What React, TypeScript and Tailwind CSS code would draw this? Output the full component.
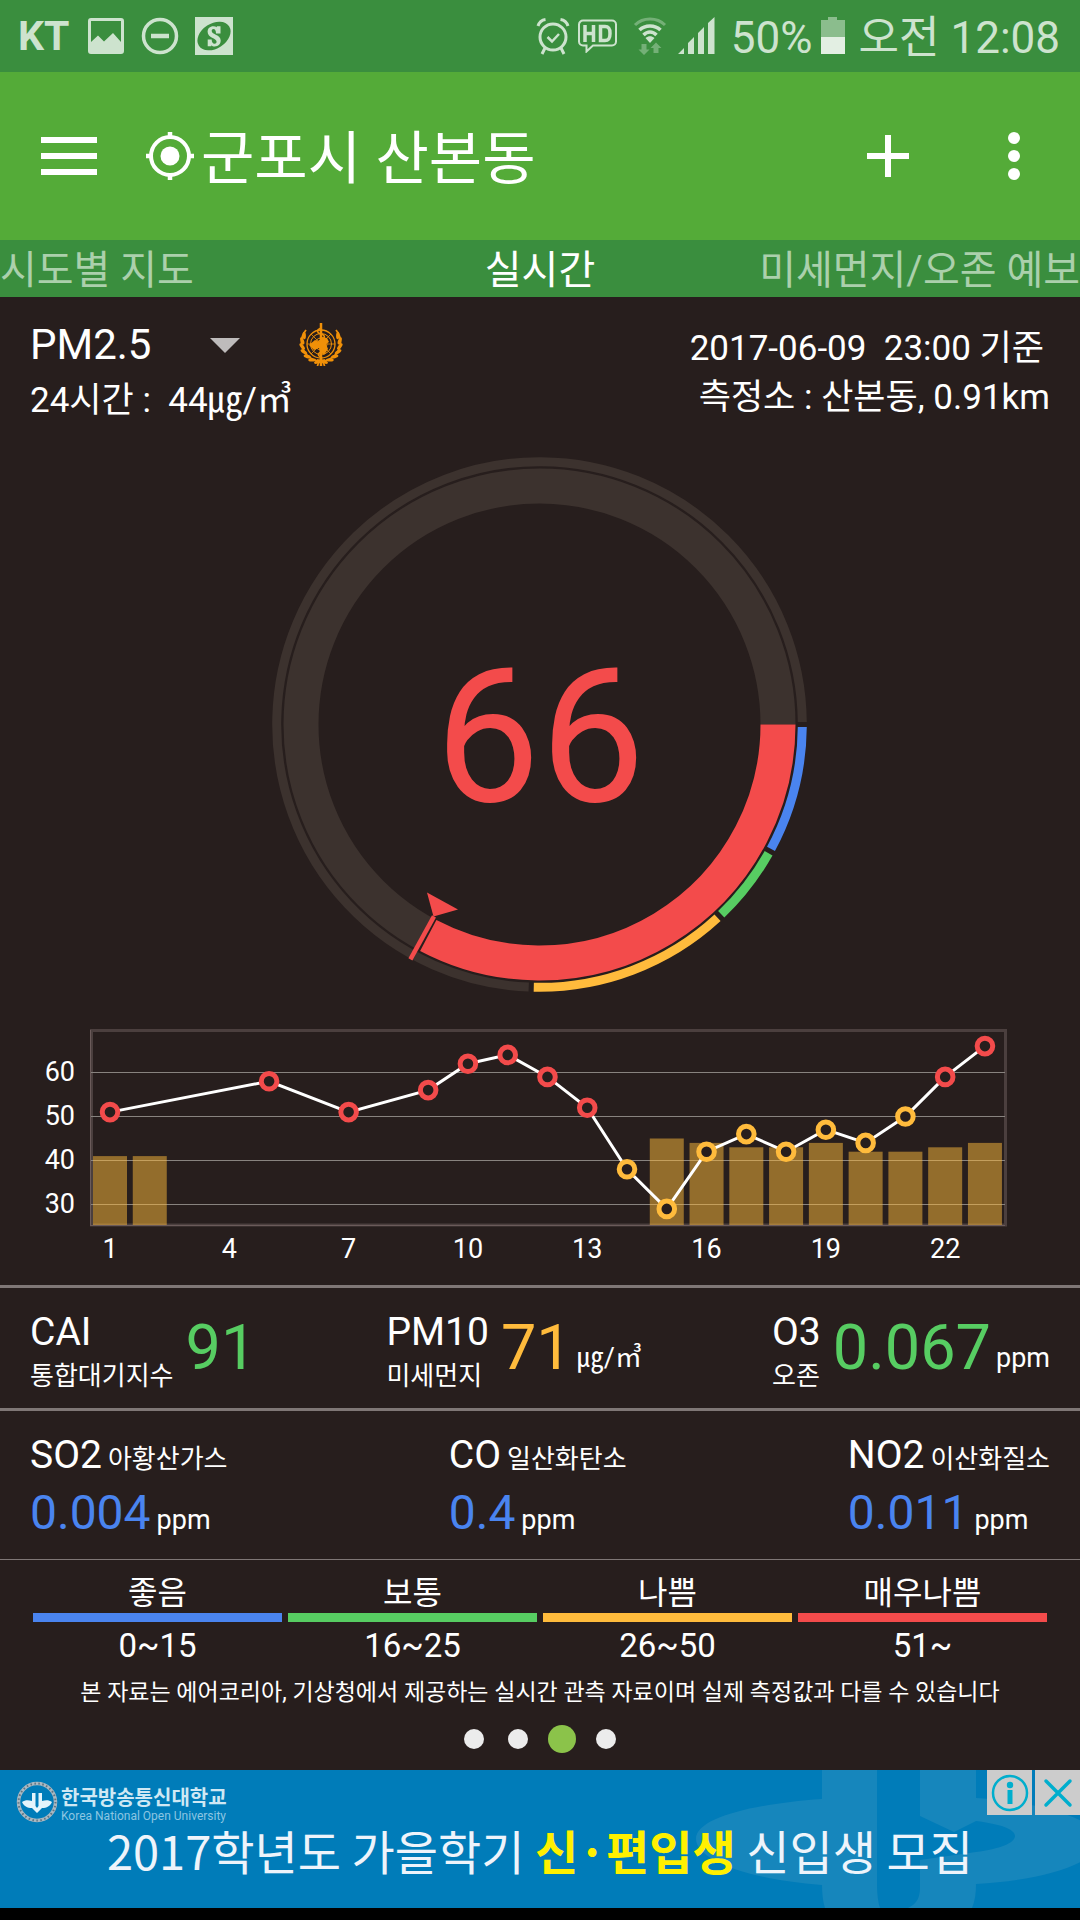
import React from "react";

const FONT = "font-['Roboto','Noto_Sans_CJK_KR',sans-serif]";

const BLUE = "#4a84ef";
const GREEN = "#57cd62";
const AMBER = "#ffbb3c";
const RED = "#f34b4b";
const BG = "#271e1d";

function StatusBar() {
  return (
    <div className="flex h-[72px] items-center justify-between bg-[#3a8e3e] pr-5 pl-[18px] text-[#cde3ce]">
      <div className="flex items-center">
        <span className="text-[41px] leading-[72px] font-bold">KT</span>
        <svg className="ml-[19px]" width="36" height="36" viewBox="0 0 36 36" fill="currentColor" aria-label="사진">
          <path
            fillRule="evenodd"
            d="M3 0h30a3 3 0 0 1 3 3v30a3 3 0 0 1-3 3H3a3 3 0 0 1-3-3V3a3 3 0 0 1 3-3ZM3 3v21l7-6.500 6 6L25 15l8 9V3Z"
          />
        </svg>
        <svg className="ml-[17px]" width="38" height="38" viewBox="0 0 38 38" fill="none" stroke="currentColor" aria-label="방해 금지">
          <circle cx="19" cy="19" r="16.500" strokeWidth="3.500" />
          <path d="M10 19h18" strokeWidth="4.500" />
        </svg>
        <svg className="ml-4" width="38" height="38" viewBox="0 0 38 38" aria-label="알림">
          <rect width="38" height="38" fill="currentColor" />
          <ellipse cx="19" cy="19" rx="18" ry="12.500" transform="rotate(-33 19 19)" fill="#3a8e3e" />
          <path
            d="M25.500 13.500v3h-4.500c0-3-1-4.500-2.500-4.500-1.200 0-1.800.800-1.800 2 0 3.800 9 3.400 9 9.600 0 3.600-2.400 5.900-6 5.900-1.600 0-2.600-.400-3.400-1.200v.900h-3.600v-6.600h4c0 2.600 1 4.200 2.900 4.200 1.200 0 2-.800 2-2 0-3.700-9-3.800-9-10 0-3.400 2.300-5.600 5.800-5.600 1.400 0 2.500.400 3.400 1.100V9.200h3.700Z"
            fill="currentColor"
          />
        </svg>
      </div>
      <div className="flex items-center">
        <svg width="36" height="38" viewBox="0 0 36 38" fill="none" stroke="currentColor" aria-label="알람">
          <circle cx="18" cy="20" r="13" strokeWidth="3" />
          <path d="M12.500 20l4.500 4.500 7-7.500" strokeWidth="2.500" />
          <path d="M3 9c1-3 4-6 7.500-6.500M33 9c-1-3-4-6-7.500-6.500M10 31l-3 6M26 31l3 6" strokeWidth="3" />
        </svg>
        <svg className="ml-[7px]" width="40" height="34" viewBox="0 0 40 34" fill="none" stroke="currentColor" aria-label="HD 통화">
          <path
            d="M5 1.500h29a4 4 0 0 1 4 4v17a4 4 0 0 1-4 4H15L8.500 32.500v-6H5a4 4 0 0 1-4-4v-17a4 4 0 0 1 4-4Z"
            strokeWidth="2"
          />
          <path d="M7 6v17M15.500 6v17M7 14.500h8.500M22.500 7.600v13.800h4.500c4 0 5-2 5-7s-1-6.800-5-6.800Z" strokeWidth="3.500" />
        </svg>
        <svg className="ml-[15px]" width="34" height="38" viewBox="0 0 34 38" fill="none" stroke="currentColor" aria-label="와이파이">
          <path d="M2 8C10 0 24 0 32 8" strokeWidth="3" opacity="0.400" />
          <path d="M6.500 13C12 7.500 22 7.500 27.500 13M10.500 18c4-4 9-4 13 0" strokeWidth="3.500" />
          <path d="M12.500 21c3-2.500 6-2.500 9 0L17 26Z" fill="currentColor" stroke="none" />
          <path d="M8.500 27h5v5.500h3L11 38l-5.500-5.500h3ZM20.500 36h5v-5h3L23 25.500 17.500 31h3Z" fill="currentColor" stroke="none" opacity="0.400" />
        </svg>
        <svg className="ml-[10px]" width="38" height="38" viewBox="0 0 38 38" fill="currentColor" aria-label="신호">
          <path d="M1 37l6-6v6ZM11 37V26l6-6v17ZM21 37V16l6-6v27ZM31 37V6l6.500-6v37Z" />
        </svg>
        <span className="ml-4 pt-1 text-[44px] leading-[72px]">50%</span>
        <svg className="ml-[7px]" width="26" height="38" viewBox="0 0 26 38" aria-label="배터리">
          <path d="M1 3h7V0h9v3h8v17H1Z" fill="currentColor" opacity="0.550" />
          <path d="M1 20h24v17H1Z" fill="#e3efe3" />
        </svg>
        <span className="ml-[13px] pt-1 text-[44px] leading-[72px] whitespace-pre">오전 12:08</span>
      </div>
    </div>
  );
}

function Header() {
  return (
    <header className="flex h-[168px] items-center bg-[#54ab38] text-white">
      <button aria-label="메뉴" className="ml-[41px] flex w-14 flex-col gap-[10px]">
        <span className="h-[6px] w-full bg-white" />
        <span className="h-[6px] w-full bg-white" />
        <span className="h-[6px] w-full bg-white" />
      </button>
      <svg className="ml-[49px]" width="48" height="50" viewBox="0 0 48 50" fill="none" stroke="currentColor" aria-hidden="true">
        <circle cx="24" cy="25" r="19" strokeWidth="4" />
        <circle cx="24" cy="25" r="9.500" fill="currentColor" stroke="none" />
        <path d="M24 1v6M24 43v6M0 25h6M42 25h6" strokeWidth="4.500" />
      </svg>
      <h1 className="ml-[7px] pt-[5px] text-[58px] leading-[80px]">군포시 산본동</h1>
      <button aria-label="지역 추가" className="ml-auto">
        <svg width="42" height="42" viewBox="0 0 42 42" stroke="currentColor" strokeWidth="6">
          <path d="M21 0v42M0 21h42" />
        </svg>
      </button>
      <button aria-label="더보기" className="mr-[60px] ml-[99px] flex flex-col gap-[6px]">
        <span className="size-3 rounded-full bg-white" />
        <span className="size-3 rounded-full bg-white" />
        <span className="size-3 rounded-full bg-white" />
      </button>
    </header>
  );
}

function Tabs() {
  return (
    <nav className="grid grid-cols-3 bg-[#3a8e3e] pt-1 text-[40px] leading-[53px] whitespace-nowrap text-[#abd0ac]">
      <button className="text-left">시도별 지도</button>
      <button className="text-center text-white">실시간</button>
      <button className="text-right">미세먼지/오존 예보</button>
    </nav>
  );
}

function WhoEmblem() {
  const leaves = [100, 118, 136, 154, 172, 190, 208];
  return (
    <svg width="44" height="44" viewBox="0 0 44 44" fill="none" stroke="#f09008" aria-label="WHO 기준">
      <circle cx="22" cy="21" r="14" strokeWidth="1.300" />
      <circle cx="22" cy="21" r="10.500" strokeWidth="1" />
      <circle cx="22" cy="21" r="6" strokeWidth="1" />
      <path d="M8 21h28M12 11l20 20M32 11l-20 20" strokeWidth="0.800" />
      <path d="M10 22l6-5 4 2 3-5 5 1 2 4-3 2 2 5-4 6-4-3-1-4-5 2Z" fill="#f09008" stroke="none" />
      <path d="M22 0v43" strokeWidth="2.500" />
      <path d="M22 5c-5 2-4 5 0 6s5 4 0 6-4 5 0 6 4 4 0 6-3 4 0 5" strokeWidth="1.500" />
      {[1, -1].map((side) => (
        <g key={side} transform={side === 1 ? undefined : "translate(44 0) scale(-1 1)"}>
          <path d="M7 7C-1 17 1 34 20 38.500M26 37c-5 1-7 2-7.500 6" strokeWidth="1.800" />
          {leaves.map((a) => {
            const t = (a * Math.PI) / 180;
            const x = 22 + 19 * Math.cos(t);
            const y = 21 + 18 * Math.sin(t);
            return (
              <ellipse key={a} cx={x} cy={y} rx="3.800" ry="1.700" transform={`rotate(${a + 60} ${x} ${y})`} fill="#f09008" stroke="none" />
            );
          })}
        </g>
      ))}
    </svg>
  );
}

function InfoRow() {
  return (
    <section className="flex justify-between px-[30px] pt-5">
      <div>
        <div className="flex h-14 items-center">
          <div className="relative flex w-[222px] items-center">
            <select
              aria-label="측정 항목"
              className="w-full appearance-none bg-transparent text-[42px] leading-[56px] text-white outline-none"
            >
              <option>PM2.5</option>
              <option>PM10</option>
            </select>
            <svg className="pointer-events-none absolute right-3" width="30" height="15" viewBox="0 0 30 15" aria-hidden="true">
              <path d="M0 0h30L15 15Z" fill="#bebbbb" />
            </svg>
          </div>
          <span className="ml-[47px]">
            <WhoEmblem />
          </span>
        </div>
        <p className="text-[35px] leading-[56px] whitespace-pre">24시간 :  44㎍/㎥</p>
      </div>
      <div className="pt-[7px] text-right text-[35px] leading-[49px]">
        <p className="pr-[6px] whitespace-pre">2017-06-09  23:00 기준</p>
        <p>측정소 : 산본동, 0.91km</p>
      </div>
    </section>
  );
}

const DEG_PER_UNIT = 1.8;
const CENTER = 267.5;

function polar(r: number, deg: number) {
  const t = (deg * Math.PI) / 180;
  return `${CENTER + r * Math.cos(t)} ${CENTER + r * Math.sin(t)}`;
}

function arc(r: number, from: number, to: number) {
  return `M${polar(r, from)}A${r} ${r} 0 ${to - from > 180 ? 1 : 0} 1 ${polar(r, to)}`;
}

function Gauge({ value }: { value: number }) {
  const end = value * DEG_PER_UNIT;
  const bands = [
    { from: 0, to: 16, color: BLUE },
    { from: 16, to: 26, color: GREEN },
    { from: 26, to: 51, color: AMBER },
    { from: 51, to: 200, color: "#3c322e" },
  ];
  return (
    <svg className="mx-auto mt-[27px] block" width="536" height="536" viewBox="0 -1 536 536" fill="none" aria-label="PM2.5 게이지">
      <circle cx={CENTER} cy={CENTER} r="238.500" stroke="#3c322e" strokeWidth="35" />
      <path d={arc(238.5, 0, end)} stroke={BG} strokeWidth="36" />
      <path d={arc(238.5, 0, end - 1)} stroke={RED} strokeWidth="35" />
      {bands.map((b) => (
        <path key={b.from} d={arc(262.8, b.from * DEG_PER_UNIT + 0.55, b.to * DEG_PER_UNIT - 0.55)} stroke={b.color} strokeWidth="9" />
      ))}
      <path d={`M${polar(219, end)}L${polar(268, end)}`} stroke={RED} strokeWidth="4.500" />
      <path d="M155 435.500L186 452.500 161.500 459.500Z" fill={RED} />
      <text x="268" y="344" textAnchor="middle" fill={RED} fontSize="187">
        {value}
      </text>
    </svg>
  );
}

const HOURLY: [number, number][] = [
  [1, 51], [5, 58], [7, 51], [9, 56], [10, 62], [11, 64], [12, 59], [13, 52], [14, 38],
  [15, 29], [16, 42], [17, 46], [18, 42], [19, 47], [20, 44], [21, 50], [22, 59], [23, 66],
];
const DAILY: [number, number][] = [
  [1, 41], [2, 41], [15, 45], [16, 44], [17, 43], [18, 43], [19, 44], [20, 42], [21, 42], [22, 43], [23, 44],
];

const hx = (h: number) => 110 + (h - 1) * 39.77;
const vy = (v: number) => 62.5 + (60 - v) * 4.4;

function Chart() {
  return (
    <svg className="mt-[18px] block w-full" viewBox="0 0 1080 275" fill="none" aria-label="시간별 농도 그래프">
      <rect x="91.500" y="20.500" width="914" height="194.500" stroke="#4b3f3e" strokeWidth="3" />
      {[60, 50, 40, 30].map((v) => (
        <g key={v}>
          <path d={`M90 ${vy(v)}h915`} stroke="#88837f" strokeWidth="1" />
          <text x="75" y={vy(v) + 8.5} textAnchor="end" fill="#fff" fontSize="27">
            {v}
          </text>
        </g>
      ))}
      <path d="M91 215.500h914M90.500 20v196" stroke="#6b5b5a" strokeWidth="1" />
      {DAILY.map(([h, v]) => (
        <rect key={h} x={hx(h) - 17} y={vy(v)} width="34" height={215 - vy(v)} fill={AMBER} fillOpacity="0.500" />
      ))}
      <polyline points={HOURLY.map(([h, v]) => `${hx(h)},${vy(v)}`).join(" ")} stroke="#fff" strokeWidth="3" />
      {HOURLY.map(([h, v]) => (
        <circle key={h} cx={hx(h)} cy={vy(v)} r="7.800" fill={BG} stroke={v > 50 ? RED : AMBER} strokeWidth="5" />
      ))}
      {[1, 4, 7, 10, 13, 16, 19, 22].map((h) => (
        <text key={h} x={hx(h)} y="248" textAnchor="middle" fill="#fff" fontSize="27">
          {h}
        </text>
      ))}
    </svg>
  );
}

function MainMetric({ name, sub, value, unit, color }: { name: string; sub: string; value: string; unit?: string; color: string }) {
  return (
    <div className="flex">
      <div>
        <p className="text-[39px] leading-[48px]">{name}</p>
        <p className="mt-1 text-[26px] leading-[32px]">{sub}</p>
      </div>
      <div className="ml-3 flex items-end self-start pt-1">
        <span className={`text-[63px] leading-[72px] ${color}`}>{value}</span>
        {unit && <span className="mb-[6px] ml-[5px] text-[27px] leading-[40px]">{unit}</span>}
      </div>
    </div>
  );
}

function SubMetric({ name, sub, value }: { name: string; sub: string; value: string }) {
  return (
    <div>
      <p className="text-[39px] leading-[48px]">
        {name}
        <span className="ml-[6px] text-[26px] leading-none">{sub}</span>
      </p>
      <p className="mt-1 text-[48px] leading-[60px] text-[#4a84ef]">
        {value}
        <span className="ml-[6px] text-[27px] leading-none text-white">ppm</span>
      </p>
    </div>
  );
}

const LEVELS = [
  { label: "좋음", range: "0~15", bar: "bg-[#4a84ef]" },
  { label: "보통", range: "16~25", bar: "bg-[#57cd62]" },
  { label: "나쁨", range: "26~50", bar: "bg-[#ffbb3c]" },
  { label: "매우나쁨", range: "51~", bar: "bg-[#f34b4b]" },
];

function AdBanner() {
  return (
    <aside className="relative h-[138px] overflow-hidden bg-[#007cb9]">
      <svg className="absolute top-0 right-0" width="390" height="138" viewBox="0 0 390 138" fill="#1686bc" aria-hidden="true">
        <path d="M132 0h55v90l-55-8C108 79 93 73 93 66s15-13 39-16l38 21 17 10v34h-55C60 110 6 90 6 69S62 34 132 29Z" />
        <path d="M132 112v3c0 9 1 17 3 23h55c-2-6-3-14-3-23V84h-50Z" />
        <path d="M230 0h56v28c70 4 124 24 124 42 0 22-54 40-124 44 0 9-1 17-4 24h-64c9-4 12-11 12-20V90l56-8c24-3 39-9 39-16s-15-12-39-15l-22 11-34-16Z" />
      </svg>
      <div className="relative flex h-[54px] items-center pt-[10px] pl-4 text-[#cfe8f4]">
        <svg width="42" height="42" viewBox="0 0 42 42" fill="none" aria-hidden="true">
          <circle cx="21" cy="21" r="18.500" stroke="#a9b8c2" strokeWidth="3.500" />
          <circle cx="21" cy="21" r="18.500" stroke="#5f7482" strokeWidth="2" strokeDasharray="1.500 2.500" />
          <path
            d="M16 12h3.500v13L21 27l1.500-2V12H26v8c4-1 7-1 10 1-2 4-5 6-10 6l-5 5-5-5c-5 0-8-2-10-6 3-2 6-2 10-1Z"
            fill="#e4f4fb"
          />
        </svg>
        <div className="ml-[3px] pt-1">
          <p className="text-[20px] leading-[24px] font-bold">한국방송통신대학교</p>
          <p className="text-[12px] leading-[12px] text-[#8cc6e2]">Korea National Open University</p>
        </div>
      </div>
      <a
        href="#ad"
        className="relative block text-center font-['Noto_Sans_CJK_KR',sans-serif] text-[47px] leading-[52px] whitespace-nowrap text-[#eef4fb]"
      >
        2017학년도 가을학기 <strong className="font-bold text-[#fff000]">신·편입생</strong> 신입생 모집
      </a>
      <div className="absolute top-0 right-0 flex gap-[3px]">
        <button aria-label="광고 정보" className="flex size-[45px] items-center justify-center bg-[#ccc]">
          <svg width="38" height="38" viewBox="0 0 38 38" fill="none" stroke="#00aecd">
            <circle cx="19" cy="19" r="17" strokeWidth="2.500" />
            <circle cx="19" cy="11" r="3.200" fill="#00aecd" stroke="none" />
            <path d="M19 16v14" strokeWidth="5" />
          </svg>
        </button>
        <button aria-label="광고 닫기" className="flex size-[45px] items-center justify-center bg-[#ccc]">
          <svg width="30" height="30" viewBox="0 0 30 30" fill="none" stroke="#00aecd" strokeWidth="3.500" strokeLinecap="round">
            <path d="M3 3l24 24M27 3L3 27" />
          </svg>
        </button>
      </div>
    </aside>
  );
}

export default function App() {
  return (
    <div className={`flex min-h-screen flex-col bg-black text-white ${FONT}`}>
      <StatusBar />
      <Header />
      <Tabs />
      <main className="bg-[#271e1d]">
        <InfoRow />
        <Gauge value={66} />
        <Chart />
        <section className="flex h-[123px] justify-between border-t-[3px] border-[#7f7776] px-[30px] pt-5">
          <MainMetric name="CAI" sub="통합대기지수" value="91" color="text-[#57cd62]" />
          <MainMetric name="PM10" sub="미세먼지" value="71" unit="㎍/㎥" color="text-[#ffbb3c]" />
          <MainMetric name="O3" sub="오존" value="0.067" unit="ppm" color="text-[#57cd62]" />
        </section>
        <section className="flex h-[151px] justify-between border-t-[3px] border-[#7f7776] px-[30px] pt-5">
          <SubMetric name="SO2" sub="아황산가스" value="0.004" />
          <SubMetric name="CO" sub="일산화탄소" value="0.4" />
          <SubMetric name="NO2" sub="이산화질소" value="0.011" />
        </section>
        <section className="border-t border-[#7f7776] pt-[13px]">
          <ul className="grid grid-cols-4 gap-[6px] px-[33px] text-center">
            {LEVELS.map((l) => (
              <li key={l.label}>
                <p className="text-[32px] leading-[40px]">{l.label}</p>
                <div className={`h-[9px] ${l.bar}`} />
                <p className="mt-[2px] text-[33px] leading-[44px]">{l.range}</p>
              </li>
            ))}
          </ul>
          <p className="mt-[9px] text-center text-[23px] leading-[32px] whitespace-nowrap">
            본 자료는 에어코리아, 기상청에서 제공하는 실시간 관측 자료이며 실제 측정값과 다를 수 있습니다
          </p>
          <div className="mt-4 flex items-center justify-center gap-6 pb-[17px]">
            <span className="size-5 rounded-full bg-[#ececec]" />
            <span className="size-5 rounded-full bg-[#ececec]" />
            <span className="-mx-1 size-7 rounded-full bg-[#8bc34a]" />
            <span className="size-5 rounded-full bg-[#ececec]" />
          </div>
        </section>
      </main>
      <AdBanner />
    </div>
  );
}
